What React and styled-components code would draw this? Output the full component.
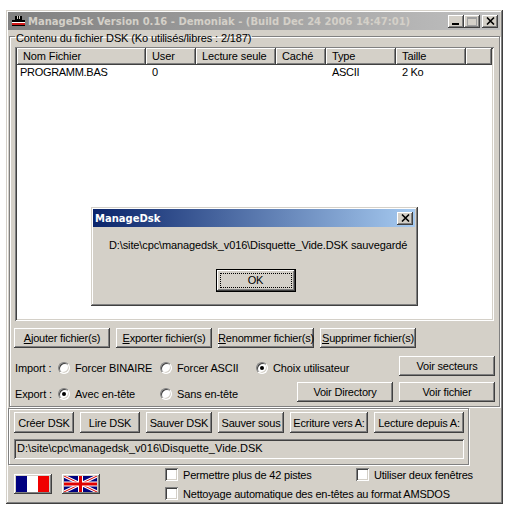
import styled, { createGlobalStyle } from 'styled-components';

const face = '#d4d0c8';

const GlobalStyle = createGlobalStyle`
  html, body {
    margin: 0;
    background: #fff;
  }
  body {
    font-family: "Liberation Sans", Arial, sans-serif;
    font-size: 11px;
    letter-spacing: -0.12px;
    color: #000;
  }
`;

const raised = `
  box-shadow: inset -1px -1px 0 #404040, inset 1px 1px 0 #fff, inset -2px -2px 0 #808080, inset 2px 2px 0 ${face};
`;

const frame = `
  box-shadow: inset -1px -1px 0 #404040, inset 1px 1px 0 ${face}, inset -2px -2px 0 #808080, inset 2px 2px 0 #fff;
`;

const sunken = `
  box-shadow: inset 1px 1px 0 #808080, inset -1px -1px 0 #fff, inset 2px 2px 0 #404040, inset -2px -2px 0 ${face};
`;

const etched = `
  border: 1px solid #808080;
  box-shadow: 1px 1px 0 #fff, inset 1px 1px 0 #fff;
`;

const Window = styled.div`
  position: relative;
  box-sizing: border-box;
  width: 497px;
  height: 494px;
  margin: 10px 0 0 6px;
  padding: 2px 3px 3px 2px;
  background: ${face};
  ${frame}
`;

const TitleBar = styled.div`
  display: flex;
  align-items: center;
  height: 18px;
  padding: 0 2px;
  background: linear-gradient(90deg, ${(p) => p.$from}, ${(p) => p.$to});
  color: ${(p) => p.$color};
  font-family: "DejaVu Sans", Verdana, sans-serif;
  font-weight: bold;
  font-size: 10px;
  letter-spacing: 0;
  white-space: nowrap;
`;

const TitleText = styled.span`
  flex: 1;
`;

const IconSlot = styled.span`
  display: flex;
  margin: 0 1px;
`;

const Controls = styled.div`
  display: flex;
`;

const CtrlButton = styled.div`
  box-sizing: border-box;
  display: flex;
  align-items: center;
  justify-content: center;
  width: 16px;
  height: 13px;
  margin-left: ${(p) => p.$gap || 0}px;
  background: ${face};
  ${raised}
`;

const Group = styled.fieldset`
  box-sizing: border-box;
  min-width: 0;
  margin: -2px 0 0 1px;
  padding: 0 5px;
  height: 379px;
  ${etched}
`;

const Legend = styled.legend`
  padding: 4px 1px 0;
  line-height: 13px;
  white-space: nowrap;
`;

const List = styled.div`
  box-sizing: border-box;
  height: 274px;
  margin-top: 2px;
  background: #fff;
  padding: 1px 2px;
  ${sunken}
`;

const ListGrid = styled.div`
  display: grid;
  grid-template-columns: 129px 50px 80px 50px 70px 70px 1fr;
`;

const Head = styled.div`
  box-sizing: border-box;
  height: 17px;
  line-height: 16px;
  padding-left: 6px;
  background: ${face};
  ${raised}
`;

const Cell = styled.div`
  height: 15px;
  line-height: 15px;
  letter-spacing: -0.3px;
  padding-left: ${(p) => (p.$first ? 3 : 6)}px;
`;

const ButtonRow = styled.div`
  display: flex;
  gap: 6px;
  margin: ${(p) => p.$top || 0}px -1px 0 ${(p) => (p.$flush ? 0 : -1)}px;
`;

const Button = styled.button`
  box-sizing: border-box;
  flex: none;
  width: ${(p) => p.$w}px;
  height: ${(p) => p.$h || 20}px;
  margin: 0;
  padding: 0;
  border: 0;
  background: ${face};
  font: inherit;
  letter-spacing: -0.2px;
  color: #000;
  white-space: nowrap;
  ${raised}
`;

const PushedButton = styled(Button)`
  margin-left: auto;
`;

const Options = styled.div`
  display: flex;
  align-items: center;
  margin-top: 3px;
  flex: 1;
  min-width: 0;
`;

const OptLabel = styled.span`
  width: 43px;
`;

const Radio = styled.span`
  position: relative;
  box-sizing: border-box;
  display: inline-block;
  flex: none;
  width: 12px;
  height: 12px;
  border-radius: 50%;
  margin-right: 5px;
  background: #fff;
  border: 1px solid;
  border-color: #808080 #fff #fff #808080;
  box-shadow: inset 1px 1px 0 #404040, inset -1px -1px 0 ${face};
  &::after {
    content: '';
    display: ${(p) => (p.$on ? 'block' : 'none')};
    position: absolute;
    left: 3px;
    top: 3px;
    width: 4px;
    height: 4px;
    border-radius: 50%;
    background: #000;
  }
`;

const Choice = styled.label`
  display: flex;
  align-items: center;
  width: ${(p) => p.$w}px;
  white-space: nowrap;
`;

const FileGroup = styled.div`
  box-sizing: border-box;
  width: 461px;
  height: 57px;
  margin-top: 1px;
  padding: 3px 4px 0 5px;
  ${etched}
`;

const PathBox = styled.div`
  box-sizing: border-box;
  height: 20px;
  line-height: 19px;
  margin-top: 6px;
  padding-left: 3px;
  letter-spacing: 0.03px;
  ${sunken}
`;

const Bottom = styled.div`
  display: flex;
  margin-left: 6px;
`;

const FlagButton = styled.div`
  box-sizing: border-box;
  width: 38px;
  height: 20px;
  margin: 9px 10px 0 0;
  padding: 2px 3px 2px 2px;
  background: ${face};
  ${raised}
  svg { display: block; }
`;

const Checks = styled.div`
  display: grid;
  grid-template-columns: 191px 1fr;
  grid-auto-rows: 19px;
  margin-left: 55px;
  letter-spacing: -0.2px;
`;

const Check = styled.label`
  display: flex;
  align-items: center;
  white-space: nowrap;
  grid-column: ${(p) => p.$span || 'auto'};
`;

const Box = styled.span`
  box-sizing: border-box;
  flex: none;
  width: 13px;
  height: 13px;
  margin-right: 5px;
  background: #fff;
  ${sunken}
`;

const Dialog = styled.div`
  position: absolute;
  left: 85px;
  top: 197px;
  box-sizing: border-box;
  width: 327px;
  height: 99px;
  padding: 2px 3px 3px 2px;
  background: ${face};
  ${frame}
`;

const DialogText = styled.div`
  margin: 10px 0 0 16px;
  line-height: 16px;
  white-space: nowrap;
`;

const DialogFoot = styled.div`
  display: flex;
  justify-content: center;
  margin-top: 16px;
  padding-left: 3px;
`;

const OkButton = styled.button`
  box-sizing: border-box;
  width: 80px;
  height: 23px;
  padding: 0;
  background: ${face};
  border: 1px solid #000;
  font: inherit;
  letter-spacing: inherit;
  color: #000;
  box-shadow: inset -1px -1px 0 #404040, inset 1px 1px 0 #fff, inset -2px -2px 0 #808080;
  span {
    display: block;
    margin: 3px;
    line-height: 13px;
    border: 1px dotted #000;
  }
`;

const Minimize = () => (
  <svg width="10" height="9" viewBox="0 0 10 9"><rect x="1" y="6" width="7" height="2" fill="#000" /></svg>
);

const Maximize = () => (
  <svg width="10" height="9" viewBox="0 0 10 9" fill="none" stroke="#a0a0a0"><rect x="0.5" y="0.5" width="9" height="8" /><path d="M0 1.5h10" /></svg>
);

const Close = () => (
  <svg width="9" height="8" viewBox="0 0 9 8" fill="none" stroke="#000" strokeWidth="1.6"><path d="M1 0.5l7 7M8 0.5l-7 7" /></svg>
);

const AppIcon = () => (
  <svg width="16" height="14" viewBox="0 0 16 14">
    <path d="M4 2h7v4H4z" fill="#000" />
    <path d="M6 2h1v3H6zM8 2h1v3H8z" fill="#d4d0c8" />
    <path d="M1 6h13v2H1z" fill="#000" />
    <path d="M1 8h13v1H1z" fill="#fff" />
    <path d="M1 9h13v2H1z" fill="#d01818" />
    <path d="M1 11h13v1H1z" fill="#000" />
  </svg>
);

const FrenchFlag = () => (
  <svg width="33" height="16" viewBox="0 0 3 1" preserveAspectRatio="none">
    <rect width="1" height="1" fill="#000080" />
    <rect x="1" width="1" height="1" fill="#fff" />
    <rect x="2" width="1" height="1" fill="#f00000" />
  </svg>
);

const BritishFlag = () => (
  <svg width="33" height="16" viewBox="0 0 33 16" preserveAspectRatio="none">
    <rect width="33" height="16" fill="#000080" />
    <path d="M0 0L33 16M33 0L0 16" stroke="#fff" strokeWidth="3" />
    <path d="M0 0L33 16M33 0L0 16" stroke="#e00000" strokeWidth="1" />
    <path d="M16.5 0V16M0 8H33" stroke="#fff" strokeWidth="5" />
    <path d="M16.5 0V16M0 8H33" stroke="#e00000" strokeWidth="3" />
  </svg>
);

const columns = ['Nom Fichier', 'User', 'Lecture seule', 'Caché', 'Type', 'Taille', ''];
const cells = ['PROGRAMM.BAS', '0', '', '', 'ASCII', '2 Ko', ''];
const actions = [
  ['A', 'jouter fichier(s)'],
  ['E', 'xporter fichier(s)'],
  ['R', 'enommer fichier(s)'],
  ['S', 'upprimer fichier(s)'],
];
const fileButtons = [
  ['Créer DSK', 60],
  ['Lire DSK', 60],
  ['Sauver DSK', 66],
  ['Sauver sous', 66],
  ['Ecriture vers A:', 78],
  ['Lecture depuis A:', 90],
];

export default function App() {
  return (
    <>
      <GlobalStyle />
      <Window>
        <TitleBar $from="#808080" $to="#c0c0c0" $color={face}>
          <IconSlot><AppIcon /></IconSlot>
          <TitleText>ManageDsk Version 0.16 - Demoniak - (Build Dec 24 2006 14:47:01)</TitleText>
          <Controls>
            <CtrlButton><Minimize /></CtrlButton>
            <CtrlButton><Maximize /></CtrlButton>
            <CtrlButton $gap={2}><Close /></CtrlButton>
          </Controls>
        </TitleBar>
        <Group>
          <Legend>Contenu du fichier DSK (Ko utilisés/libres : 2/187)</Legend>
          <List>
            <ListGrid>
              {columns.map((c, i) => <Head key={i}>{c}</Head>)}
              {cells.map((c, i) => <Cell key={i} $first={i === 0}>{c}</Cell>)}
            </ListGrid>
          </List>
          <ButtonRow $top={7}>
            {actions.map(([k, rest]) => (
              <Button key={k} $w={96}><u>{k}</u>{rest}</Button>
            ))}
          </ButtonRow>
          <ButtonRow $top={8} $flush>
            <Options>
              <OptLabel>Import :</OptLabel>
              <Choice $w={102}><Radio />Forcer BINAIRE</Choice>
              <Choice $w={96}><Radio />Forcer ASCII</Choice>
              <Choice $w={120}><Radio $on />Choix utilisateur</Choice>
            </Options>
            <PushedButton $w={96}>Voir secteurs</PushedButton>
          </ButtonRow>
          <ButtonRow $top={6} $flush>
            <Options>
              <OptLabel>Export :</OptLabel>
              <Choice $w={102}><Radio $on />Avec en-tête</Choice>
              <Choice $w={96}><Radio />Sans en-tête</Choice>
            </Options>
            <Button $w={96}>Voir Directory</Button>
            <Button $w={96}>Voir fichier</Button>
          </ButtonRow>
        </Group>
        <FileGroup>
          <ButtonRow $flush>
            {fileButtons.map(([label, w]) => <Button key={label} $w={w} $h={21}>{label}</Button>)}
          </ButtonRow>
          <PathBox>D:\site\cpc\managedsk_v016\Disquette_Vide.DSK</PathBox>
        </FileGroup>
        <Bottom>
          <FlagButton><FrenchFlag /></FlagButton>
          <FlagButton><BritishFlag /></FlagButton>
          <Checks>
            <Check><Box />Permettre plus de 42 pistes</Check>
            <Check><Box />Utiliser deux fenêtres</Check>
            <Check $span="1 / 3"><Box />Nettoyage automatique des en-têtes au format AMSDOS</Check>
          </Checks>
        </Bottom>
        <Dialog>
          <TitleBar $from="#0a246a" $to="#a6caf0" $color="#fff">
            <TitleText>ManageDsk</TitleText>
            <CtrlButton><Close /></CtrlButton>
          </TitleBar>
          <DialogText>D:\site\cpc\managedsk_v016\Disquette_Vide.DSK sauvegardé</DialogText>
          <DialogFoot>
            <OkButton><span>OK</span></OkButton>
          </DialogFoot>
        </Dialog>
      </Window>
    </>
  );
}
